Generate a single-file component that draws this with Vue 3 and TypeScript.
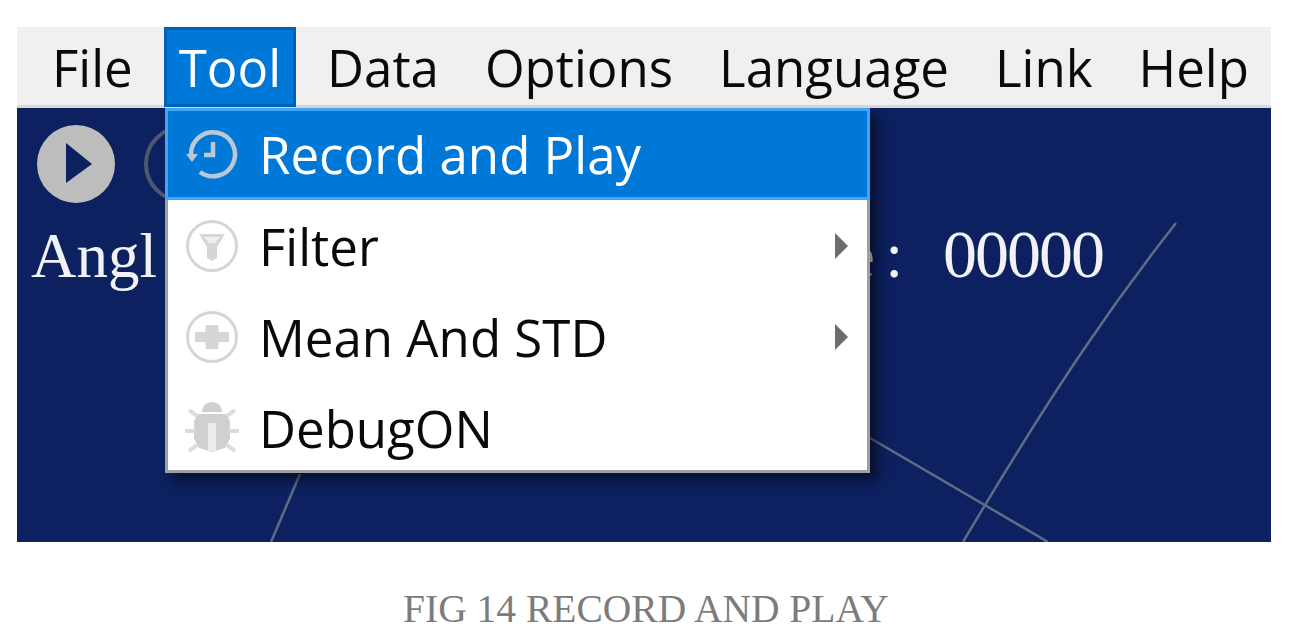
<script setup lang="ts">
interface MenuEntry {
  label: string;
  icon: 'clock' | 'filter' | 'plus' | 'bug';
  submenu?: boolean;
  active?: boolean;
}

const menuBar: string[] = ['File', 'Tool', 'Data', 'Options', 'Language', 'Link', 'Help'];

const toolMenu: MenuEntry[] = [
  { label: 'Record and Play', icon: 'clock', active: true },
  { label: 'Filter', icon: 'filter', submenu: true },
  { label: 'Mean And STD', icon: 'plus', submenu: true },
  { label: 'DebugON', icon: 'bug' }
];
</script>

<template>
  <div class="page">
    <div class="window">
      <nav class="menubar">
        <div
          v-for="name in menuBar"
          :key="name"
          class="menubar-item"
          :class="{ open: name === 'Tool' }"
        >
          {{ name }}
        </div>
      </nav>

      <div class="canvas">
        <!-- polar grid behind the readouts -->
        <svg class="grid" width="1254" height="434" viewBox="0 0 1254 434" fill="none">
          <path d="M1159 115 C1100 190 1040 275 946 434" stroke="#5f6c86" stroke-width="2.500" />
          <path d="M853 330 L1031 434" stroke="#5f6c86" stroke-width="2.500" />
          <path d="M283 366 L254 434" stroke="#5f6c86" stroke-width="2.500" />
        </svg>

        <div class="controls">
          <svg class="round-btn" width="78" height="78" viewBox="0 0 78 78">
            <circle cx="39" cy="39" r="39" fill="#bdbdbd" />
            <path d="M29 18 L55 39 L29 58 Z" fill="#0d2161" />
          </svg>
          <svg class="round-btn" width="78" height="78" viewBox="0 0 78 78" fill="none">
            <circle cx="39" cy="39" r="37" stroke="#4f5870" stroke-width="4" />
          </svg>
        </div>

        <div class="readouts">
          <span class="readout-left">Angl<span class="tail">e</span></span>
          <span class="readout-right">Range :<span class="digits">00000</span></span>
        </div>
      </div>

      <div class="menu">
        <div
          v-for="item in toolMenu"
          :key="item.label"
          class="menu-item"
          :class="{ active: item.active }"
        >
          <svg class="menu-icon" width="54" height="54" viewBox="0 0 54 54" fill="none">
            <template v-if="item.icon === 'clock'">
              <path d="M6 27 A22 22 0 1 1 15 45" stroke="#bcc8d8" stroke-width="4.500" />
              <path d="M1 27 H13 L7 35 Z" fill="#bcc8d8" />
              <path d="M28 15 V28 H19" stroke="#bcc8d8" stroke-width="4.500" />
            </template>
            <template v-else-if="item.icon === 'filter'">
              <circle cx="27" cy="27" r="24.500" stroke="#d6d6d6" stroke-width="3" />
              <path d="M14 15 H40 L32 28 V39 L27 42 L22 39 V28 Z" fill="#d6d6d6" />
              <path d="M19 18 H35 L30 24 H24 Z" fill="#f0f0f0" />
            </template>
            <template v-else-if="item.icon === 'plus'">
              <circle cx="27" cy="27" r="24.500" stroke="#d6d6d6" stroke-width="3" />
              <path d="M21 15 H33 L34 22 H44 V32 H34 L33 39 H21 L20 32 H10 V22 H20 Z" fill="#d6d6d6" />
            </template>
            <template v-else>
              <path d="M17 11 Q18 1 27 1 Q36 1 37 11 Z" fill="#d0d0d0" />
              <path d="M13 13 H41 L45 20 V38 L40 47 L27 51 L14 47 L9 38 V20 Z" fill="#d0d0d0" />
              <path d="M23 22 H31 V50 H23 Z" fill="#ececec" />
              <path d="M4 9 L12 15 M50 9 L42 15 M0 30 H10 M54 30 H44 M4 50 L12 44 M50 50 L42 44" stroke="#dcdcdc" stroke-width="4" />
            </template>
          </svg>
          <span class="menu-label">{{ item.label }}</span>
          <span v-if="item.submenu" class="menu-arrow"></span>
        </div>
      </div>
    </div>

    <p class="caption">FIG 14 RECORD AND PLAY</p>
  </div>
</template>

<style>
html,
body {
  margin: 0;
  background: #fff;
}
</style>

<style scoped>
.page {
  width: 1289px;
  height: 634px;
  padding: 27px 18px 0 17px;
  box-sizing: border-box;
  overflow: hidden;
}

.window {
  position: relative;
  width: 1254px;
}

.menubar {
  display: flex;
  gap: 16px;
  height: 81px;
  padding-left: 20px;
  box-sizing: border-box;
  background: #f0f0f0;
  border-bottom: 3px solid #d9d9d9;
  font-family: "Open Sans", sans-serif;
  font-size: 51px;
  color: #0a0a0a;
}

.menubar-item {
  display: flex;
  align-items: center;
  height: 80px;
  padding: 0 15px;
  box-sizing: border-box;
}

.menubar-item.open {
  background: #0078d7;
  border: 3px solid #0062b4;
  padding: 0 12px;
  color: #fff;
}

.canvas {
  position: relative;
  height: 434px;
  background: #0d2161;
  overflow: hidden;
}

.grid {
  position: absolute;
  inset: 0;
}

.controls {
  position: relative;
  display: flex;
  gap: 29px;
  padding: 17px 0 0 20px;
}

.round-btn {
  display: block;
}

.readouts {
  position: relative;
  display: flex;
  align-items: baseline;
  margin-top: 15px;
  padding: 0 168px 0 14px;
  font-family: "Liberation Serif", serif;
  font-size: 63px;
  line-height: 72px;
  color: #f0f2f5;
}

.readout-left .tail {
  margin-left: 14px;
}

.readout-right {
  margin-left: auto;
  word-spacing: -5px;
}

.digits {
  margin-left: 40px;
  font-size: 68px;
  letter-spacing: -2px;
}

.menu {
  position: absolute;
  top: 81px;
  left: 148px;
  width: 705px;
  box-sizing: border-box;
  background: #fff;
  border: 3px solid #a0a0a0;
  border-top: 0;
  box-shadow: 8px 8px 10px rgba(0, 0, 0, 0.5);
  font-family: "Open Sans", sans-serif;
  font-size: 51px;
  color: #0a0a0a;
}

.menu-item {
  display: flex;
  align-items: center;
  height: 91px;
  padding: 0 19px 0 17px;
  box-sizing: border-box;
}

.menu-item:last-child {
  height: 88px;
  padding-top: 3px;
}

.menu-item.active {
  height: 92px;
  margin: 0 -3px;
  padding: 0 19px 0 17px;
  background: #0078d7;
  border: 3px solid #3ea6f5;
  color: #fff;
}

.menu-icon {
  flex: none;
  margin-right: 20px;
}

.menu-label {
  flex: 1;
  white-space: nowrap;
}

.menu-arrow {
  width: 0;
  height: 0;
  border-left: 13px solid #6d6d6d;
  border-top: 13px solid transparent;
  border-bottom: 13px solid transparent;
}

.caption {
  margin: 44px 0 0;
  padding-left: 4px;
  text-align: center;
  font-family: "Liberation Serif", serif;
  font-size: 39.500px;
  line-height: 46px;
  color: #7c7c7c;
}
</style>
